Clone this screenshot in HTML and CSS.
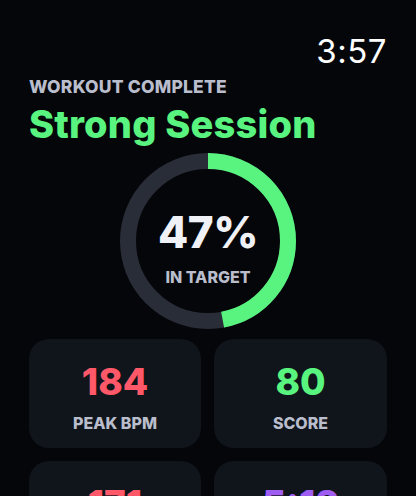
FILE: index.html
```html
<!DOCTYPE html>
<html>
<head>
<meta charset="utf-8">
<link rel="stylesheet" href="styles.css">
</head>
<body>
<div class="screen">
  <div class="status"><span class="clock">3:57</span></div>
  <div class="eyebrow">WORKOUT COMPLETE</div>
  <h1 class="title">Strong Session</h1>
  <div class="ring">
    <svg class="ring-svg" width="176" height="176" viewBox="0 0 176 176">
      <circle cx="88" cy="88" r="80" fill="none" stroke="#292d37" stroke-width="16"/>
      <circle cx="88" cy="88" r="80" fill="none" stroke="#59f47f" stroke-width="16"
        stroke-dasharray="236.25 600" transform="rotate(-90 88 88)"/>
    </svg>
    <div class="ring-label">
      <div class="pct">47%</div>
      <div class="sub">IN TARGET</div>
    </div>
  </div>
  <div class="grid">
    <div class="card"><div class="val red">184</div><div class="lbl">PEAK BPM</div></div>
    <div class="card"><div class="val green">80</div><div class="lbl">SCORE</div></div>
    <div class="card"><div class="val red">171</div><div class="lbl">AVG BPM</div></div>
    <div class="card"><div class="val purple">5:12</div><div class="lbl">ZONE TIME</div></div>
  </div>
</div>
</body>
</html>
```

FILE: styles.css
```css
html, body {
  margin: 0;
  padding: 0;
  background: #05060a;
  overflow: hidden;
}
.screen {
  width: 416px;
  height: 496px;
  padding: 0 29px;
  box-sizing: border-box;
  font-family: Inter, "Noto Sans", sans-serif;
  overflow: hidden;
}
.status {
  display: flex;
  justify-content: flex-end;
  padding-top: 31px;
  padding-right: 0;
  height: 40px;
}
.clock {
  color: #ffffff;
  font-size: 33px;
  line-height: 40px;
  font-weight: 400;
  letter-spacing: 0.5px;
}
.eyebrow {
  margin-top: 5px;
  color: #b9bdcc;
  font-size: 17.5px;
  font-weight: 800;
  line-height: 22px;
  letter-spacing: 0.2px;
}
.title {
  margin: 4px 0 0;
  color: #59f47f;
  font-size: 38px;
  font-weight: 800;
  line-height: 44px;
  letter-spacing: 0.2px;
}
.ring {
  position: relative;
  width: 176px;
  height: 176px;
  margin: 7px auto 0;
}
.ring-svg {
  display: block;
}
.ring-label {
  position: absolute;
  inset: 0;
  display: flex;
  flex-direction: column;
  align-items: center;
  justify-content: center;
  padding-top: 12px;
  box-sizing: border-box;
}
.pct {
  color: #f0f1f6;
  font-size: 44px;
  font-weight: 800;
  line-height: 48px;
  letter-spacing: -0.5px;
}
.sub {
  color: #b9bdcc;
  font-size: 16px;
  font-weight: 800;
  line-height: 20px;
  margin-top: 11px;
}
.grid {
  display: grid;
  grid-template-columns: 172px 173px;
  column-gap: 13px;
  row-gap: 13px;
  margin-top: 10px;
}
.card {
  height: 109px;
  border-radius: 20px;
  background: #10151b;
  display: flex;
  flex-direction: column;
  align-items: center;
  padding-top: 21px;
  box-sizing: border-box;
}
.val {
  font-size: 37px;
  font-weight: 800;
  line-height: 44px;
}
.lbl {
  margin-top: 9px;
  color: #b9bdcc;
  font-size: 16px;
  font-weight: 800;
  line-height: 20px;
}
.red { color: #ff5868; }
.green { color: #59f47f; }
.purple { color: #9f5cf0; }
```
